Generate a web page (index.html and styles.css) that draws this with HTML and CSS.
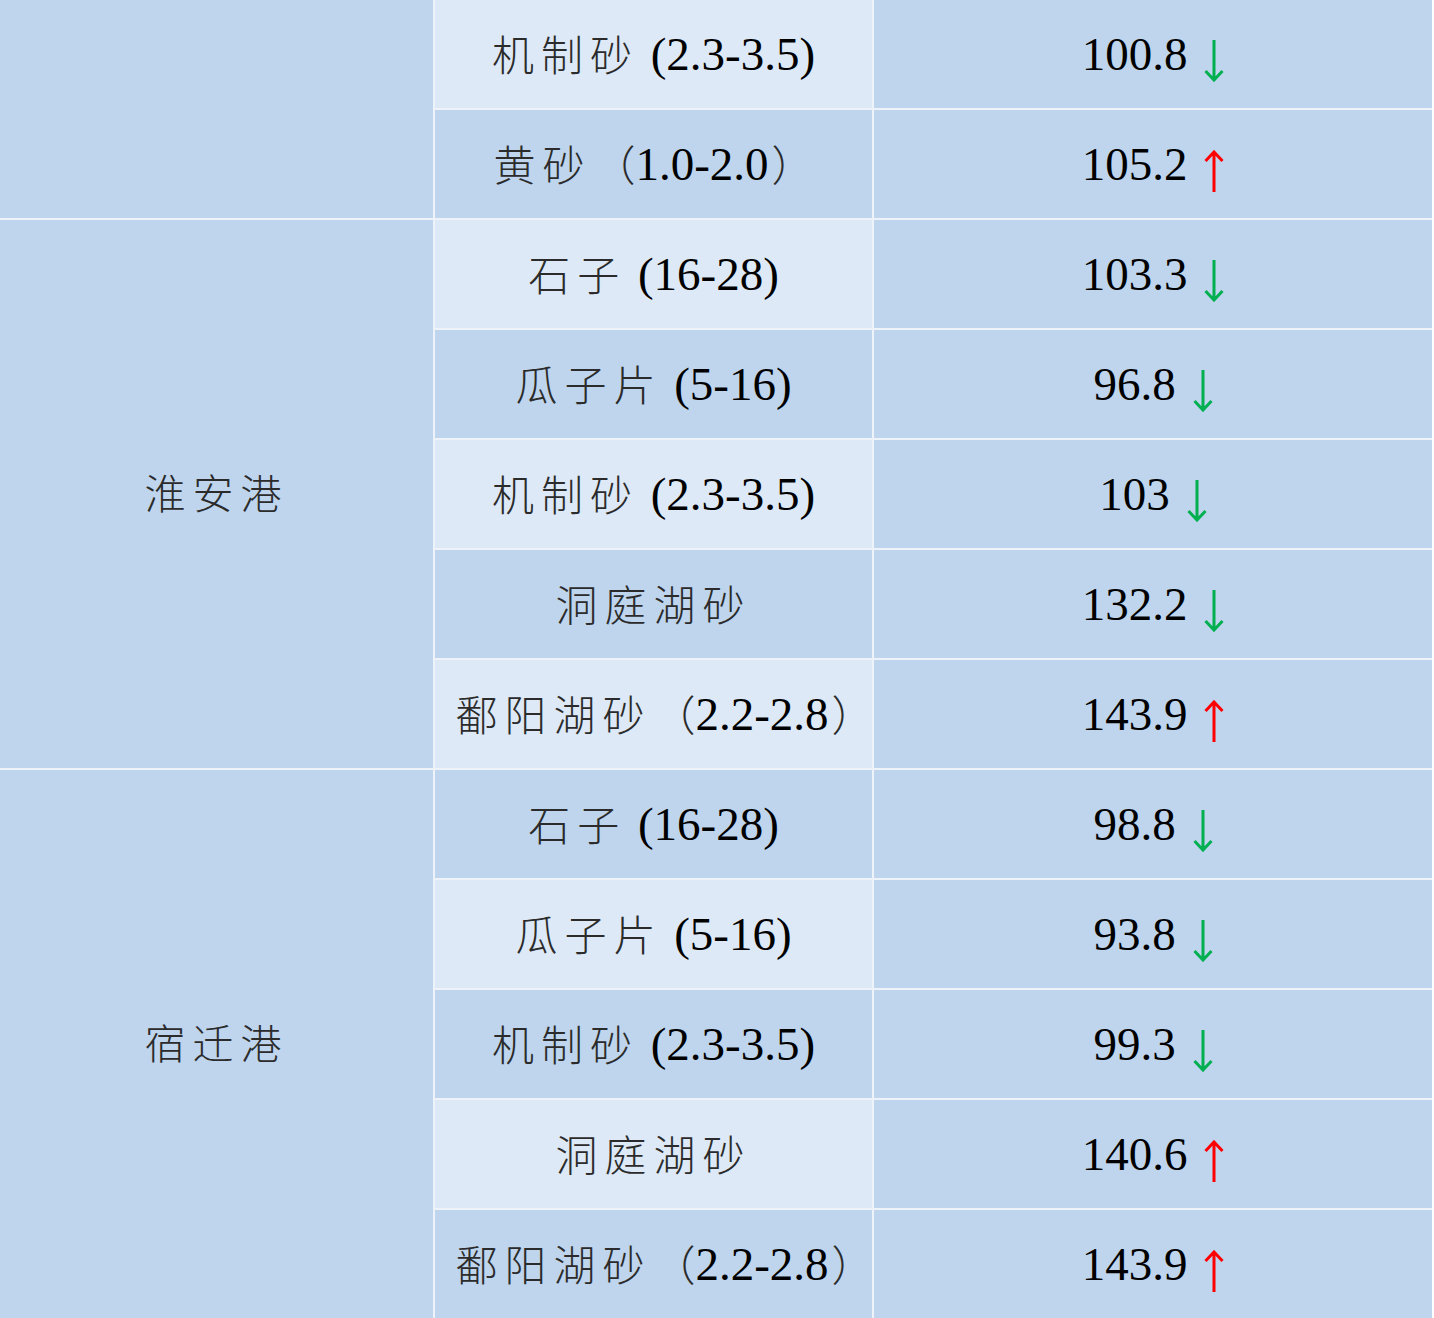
FILE: index.html
```html
<!DOCTYPE html>
<html lang="zh">
<head>
<meta charset="utf-8">
<title>价格表</title>
<link rel="stylesheet" href="styles.css">
</head>
<body>
<div class="table">
  <div class="cell port span2"></div>
  <div class="cell name light"><span class="zh">机制砂</span>&nbsp;(2.3-3.5)</div>
  <div class="cell val">100.8<svg class="arrow" viewBox="0 0 20 42"><path class="dn" d="M10 0V40M1.5 31L10 40L18.5 31"/></svg></div>
  <div class="cell name dark shift"><span class="zh">黄砂</span><span class="zh lp">（</span>1.0-2.0<span class="zh rp">）</span></div>
  <div class="cell val">105.2<svg class="arrow" viewBox="0 0 20 42"><path class="up" d="M10 42V2M1.5 11L10 2L18.5 11"/></svg></div>

  <div class="cell port span5"><span class="zh">淮安港</span></div>
  <div class="cell name light"><span class="zh">石子</span>&nbsp;(16-28)</div>
  <div class="cell val">103.3<svg class="arrow" viewBox="0 0 20 42"><path class="dn" d="M10 0V40M1.5 31L10 40L18.5 31"/></svg></div>
  <div class="cell name dark"><span class="zh">瓜子片</span>&nbsp;(5-16)</div>
  <div class="cell val">96.8<svg class="arrow" viewBox="0 0 20 42"><path class="dn" d="M10 0V40M1.5 31L10 40L18.5 31"/></svg></div>
  <div class="cell name light"><span class="zh">机制砂</span>&nbsp;(2.3-3.5)</div>
  <div class="cell val">103<svg class="arrow" viewBox="0 0 20 42"><path class="dn" d="M10 0V40M1.5 31L10 40L18.5 31"/></svg></div>
  <div class="cell name dark"><span class="zh">洞庭湖砂</span></div>
  <div class="cell val">132.2<svg class="arrow" viewBox="0 0 20 42"><path class="dn" d="M10 0V40M1.5 31L10 40L18.5 31"/></svg></div>
  <div class="cell name light"><span class="zh">鄱阳湖砂</span><span class="zh lp">（</span>2.2-2.8<span class="zh rp">）</span></div>
  <div class="cell val">143.9<svg class="arrow" viewBox="0 0 20 42"><path class="up" d="M10 42V2M1.5 11L10 2L18.5 11"/></svg></div>

  <div class="cell port span5"><span class="zh">宿迁港</span></div>
  <div class="cell name dark"><span class="zh">石子</span>&nbsp;(16-28)</div>
  <div class="cell val">98.8<svg class="arrow" viewBox="0 0 20 42"><path class="dn" d="M10 0V40M1.5 31L10 40L18.5 31"/></svg></div>
  <div class="cell name light"><span class="zh">瓜子片</span>&nbsp;(5-16)</div>
  <div class="cell val">93.8<svg class="arrow" viewBox="0 0 20 42"><path class="dn" d="M10 0V40M1.5 31L10 40L18.5 31"/></svg></div>
  <div class="cell name dark"><span class="zh">机制砂</span>&nbsp;(2.3-3.5)</div>
  <div class="cell val">99.3<svg class="arrow" viewBox="0 0 20 42"><path class="dn" d="M10 0V40M1.5 31L10 40L18.5 31"/></svg></div>
  <div class="cell name light"><span class="zh">洞庭湖砂</span></div>
  <div class="cell val">140.6<svg class="arrow" viewBox="0 0 20 42"><path class="up" d="M10 42V2M1.5 11L10 2L18.5 11"/></svg></div>
  <div class="cell name dark"><span class="zh">鄱阳湖砂</span><span class="zh lp">（</span>2.2-2.8<span class="zh rp">）</span></div>
  <div class="cell val">143.9<svg class="arrow" viewBox="0 0 20 42"><path class="up" d="M10 42V2M1.5 11L10 2L18.5 11"/></svg></div>
</div>
</body>
</html>
```

FILE: styles.css
```css
html, body {
  margin: 0;
  padding: 0;
  background: #ffffff;
}

.table {
  width: 1432px;
  display: grid;
  grid-template-columns: 433px 437px 558px;
  grid-template-rows: repeat(12, 108px);
  gap: 2px;
  background: #eef3fa;
  font-family: "Liberation Serif", "Noto Sans CJK SC", serif;
  font-size: 47px;
  color: #000;
}

.cell {
  display: flex;
  align-items: center;
  justify-content: center;
  background: #bed5ed;
  white-space: nowrap;
  line-height: 1;
}

.cell.light {
  background: #dde9f6;
}

.cell.shift {
  padding-right: 22px;
}

.span2 {
  grid-row: span 2;
}

.span5 {
  grid-row: span 5;
}

.zh {
  font-family: "Noto Sans CJK SC", sans-serif;
  font-weight: 300;
  color: #2b2b2b;
  font-size: 42px;
  letter-spacing: 7px;
  position: relative;
  top: -1px;
}

.zh.lp {
  letter-spacing: 0;
  margin-left: 2px;
}

.zh.rp {
  margin-left: 3px;
  margin-right: -22px;
  letter-spacing: 0;
}

.port .zh {
  font-size: 41px;
  letter-spacing: 7px;
  top: -3px;
}

.arrow {
  width: 20px;
  height: 42px;
  margin-left: 17px;
  align-self: center;
  position: relative;
  top: 7px;
}

.arrow path {
  fill: none;
  stroke-width: 3;
  stroke-linecap: butt;
  stroke-linejoin: miter;
}

.arrow .dn {
  stroke: #00b050;
}

.arrow .up {
  stroke: #ff0000;
}
```
